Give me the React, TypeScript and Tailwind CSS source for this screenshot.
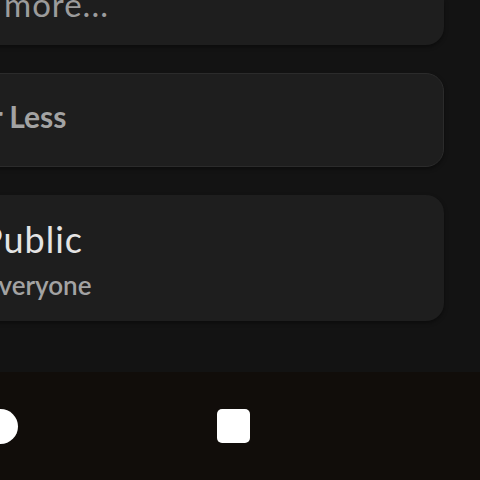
const App = () => {
  return (
    <div className="w-[480px] h-[480px] overflow-hidden bg-[#131313] flex flex-col font-['Lato',sans-serif]">
      <div className="flex flex-col gap-[28px] -ml-[140px] mr-[36px]">
        <div className="h-[45px] rounded-b-[18px] bg-[#1e1e1e] shadow-[0_2px_4px_rgba(0,0,0,0.4)] overflow-hidden">
          <p className="pl-[144px] -mt-[12px] text-[33px] leading-none tracking-[1px] text-[#9c9c9c] whitespace-nowrap">
            more...
          </p>
        </div>

        <div className="h-[94px] rounded-[18px] bg-[#1e1e1e] border border-[#2b2b2b] shadow-[0_2px_4px_rgba(0,0,0,0.4)] overflow-hidden">
          <p className="pl-[34px] pt-[27px] text-[30px] leading-none font-bold text-[#a3a3a3] whitespace-nowrap">
            More or Less
          </p>
        </div>

        <div className="h-[126px] rounded-[18px] bg-[#1e1e1e] shadow-[0_2px_4px_rgba(0,0,0,0.4)] overflow-hidden">
          <div className="pl-[124px] pt-[24px] flex flex-col whitespace-nowrap">
            <span className="-ml-[3px] text-[36px] leading-[40px] tracking-[1px] text-[#e4e4e4]">Public</span>
            <span className="mt-[9px] text-[26px] leading-[34px] font-semibold text-[#a3a3a3]">Everyone</span>
          </div>
        </div>
      </div>

      <div className="mt-auto h-[108px] bg-[#110d0a] flex items-center">
        <div className="w-[35px] h-[35px] rounded-full bg-white -ml-[17px] shrink-0" />
        <div className="w-[33px] h-[34px] rounded-[5px] bg-white ml-[199px] shrink-0" />
      </div>
    </div>
  );
};

export default App;
